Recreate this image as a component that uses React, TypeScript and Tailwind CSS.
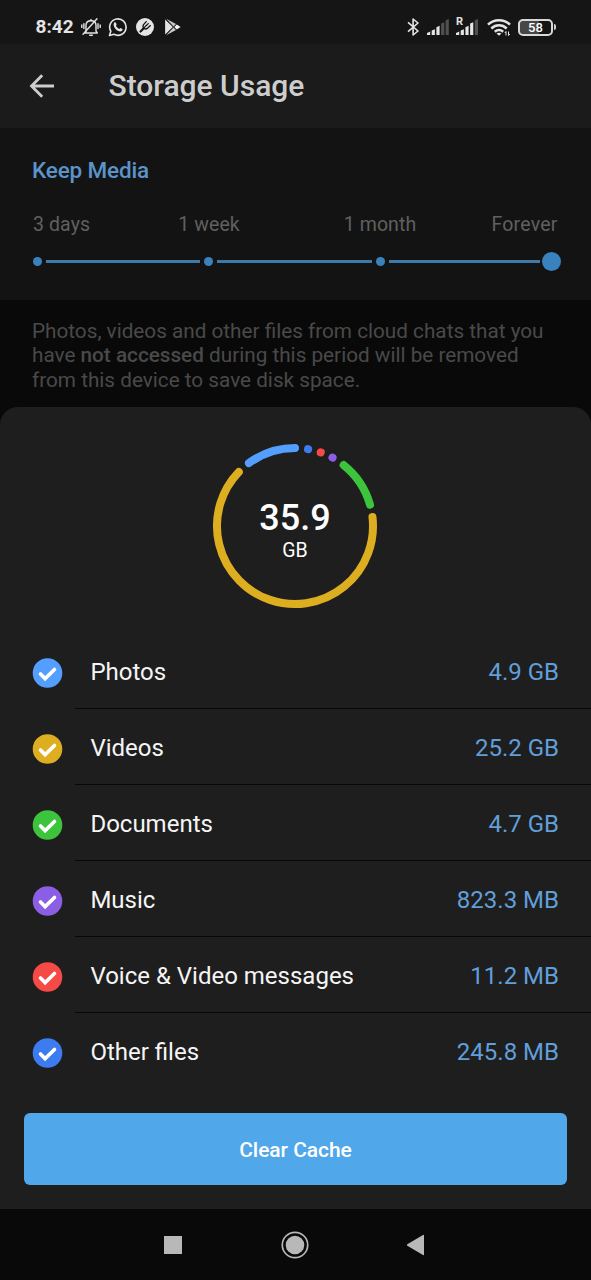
import React from "react";

type Row = { name: string; size: string; color: string };

const ROWS: Row[] = [
  { name: "Photos", size: "4.9 GB", color: "fill-[#539eff]" },
  { name: "Videos", size: "25.2 GB", color: "fill-[#deae21]" },
  { name: "Documents", size: "4.7 GB", color: "fill-[#3cc43c]" },
  { name: "Music", size: "823.3 MB", color: "fill-[#8b5fe5]" },
  { name: "Voice & Video messages", size: "11.2 MB", color: "fill-[#f54a45]" },
  { name: "Other files", size: "245.8 MB", color: "fill-[#3c7bf0]" },
];

const point = (deg: number) => {
  const a = (deg * Math.PI) / 180;
  return `${(83 + 78 * Math.sin(a)).toFixed(2)} ${(83 - 78 * Math.cos(a)).toFixed(2)}`;
};

const arc = (from: number, to: number) =>
  `M${point(from)}A78 78 0 ${to - from > 180 ? 1 : 0} 1 ${point(to)}`;

const SEGMENTS = [
  { from: -36.2, to: 0, color: "#539eff" },
  { from: 9.6, to: 9.7, color: "#3c7bf0" },
  { from: 19.2, to: 19.3, color: "#f54a45" },
  { from: 28.7, to: 28.8, color: "#8b5fe5" },
  { from: 38.6, to: 74.1, color: "#3cc43c" },
  { from: 83.4, to: 313.9, color: "#deae21" },
];

function StatusBar() {
  return (
    <div className="flex h-11 shrink-0 items-center bg-[#151515] pt-[10px] pl-[35.5px] text-[#e4e4e4]">
      <span className="w-[45.5px] text-[19px] leading-[22px] font-bold whitespace-nowrap">8:42</span>
      <svg className="h-5 w-5" viewBox="0 0 20 20" fill="none" stroke="currentColor" strokeWidth="1.4" strokeLinecap="round">
        <path d="M5 14.5V8.2C5 5.4 7 3.7 10 3.7C13 3.7 15 5.4 15 8.2V14.2L16.3 16H3.8Z" strokeLinejoin="round" />
        <path d="M10 3.4V2.4M8.7 18.2H11.3M2 17.3L16 1.8M2.9 6.8V11.5M17 6.8V11.5M.8 8V10.4M19.2 8V10.4" />
      </svg>
      <svg className="ml-[7px] h-5 w-5" viewBox="0 0 20 20" fill="none" stroke="currentColor" strokeWidth="1.6">
        <path d="M1.5 18.5L2.8 14.2A8.2 8.2 0 1 1 6 17.3Z" strokeLinejoin="round" />
        <path d="M6.2 5.6C6.8 5 7.6 5 7.9 5.7L8.6 7.5C8.7 7.9 8 8.5 7.9 8.8C8.6 10.2 9.7 11.3 11.2 12C11.5 11.9 12.1 11 12.5 11.1L14.4 12C14.9 12.3 14.4 13.7 13.6 14.1C11.8 15 9.2 13.7 7.5 12C5.8 10.2 4.9 7.2 6.2 5.6Z" fill="currentColor" stroke="none" />
      </svg>
      <svg className="ml-2 h-[18px] w-[18px]" viewBox="0 0 18 18" fill="none">
        <circle cx="9" cy="9" r="9" fill="currentColor" />
        <path d="M4.5 13.5L8 10" stroke="#151515" strokeWidth="2.2" strokeLinecap="round" />
        <path d="M10.2 3.6L7.4 6.8C6.7 8 6.9 9.3 8 10.2C9 11.1 10.3 11.1 11.3 10.4L14.4 7.6" stroke="#151515" strokeWidth="1.3" strokeLinecap="round" />
        <path d="M9 8.8L12.3 5.6" stroke="#151515" strokeWidth="1.3" strokeLinecap="round" />
      </svg>
      <svg className="ml-[10px] h-[18px] w-[18px]" viewBox="0 0 18 18">
        <path d="M1.1 1.5V16.5L8.8 9Z" fill="currentColor" />
        <path d="M2.2 .7L12 6L9.5 8.4ZM2.2 17.3L12 12L9.5 9.6Z" fill="#c8c8c8" />
        <path d="M12.8 6.5L16.6 9L12.8 11.5L10.3 9Z" fill="#f4f4f4" />
      </svg>
      <svg className="ml-[225px] h-5 w-3" viewBox="0 0 12 20" fill="none" stroke="currentColor" strokeWidth="1.6">
        <path d="M1 5.3L11 14L6.1 18V2L11 6L1 14.7" strokeLinejoin="round" />
      </svg>
      <svg className="ml-2 h-[18px] w-[22px]" viewBox="0 0 22 18" fill="currentColor">
        <path d="M0 17V15L3.2 13.6V17ZM4.7 17V12.6L7.9 11.3V17ZM9.4 17V9.2L12.6 7.8V17Z" />
        <path d="M14.1 17V5.6L17.3 4.3V17ZM18.6 17V2.3L21.8 1V17Z" fill="#505050" />
      </svg>
      <div className="relative ml-[7px] h-[18px] w-[23px]">
        <span className="absolute -top-[1px] left-0 text-[11px] leading-[10px] font-bold">R</span>
        <svg className="h-[18px] w-[23px]" viewBox="0 0 23 18" fill="currentColor">
          <path d="M0 17V15L3.2 13.6V17ZM4.7 17V12.6L7.9 11.3V17ZM9.4 17V9.2L12.6 7.8V17ZM14.1 17V5.6L17.3 4.3V17Z" />
          <path d="M18.8 17V2.3L22 1V17Z" fill="#505050" />
        </svg>
      </div>
      <svg className="ml-2 h-5 w-6" viewBox="0 0 24 20" fill="none" stroke="currentColor" strokeWidth="2.5">
        <path d="M1 7.7C7 1.7 17 1.7 23 7.7M4.3 11.5C8.8 7.3 15.2 7.3 19.7 11.5M7.8 14.8C10.4 12.5 13.6 12.5 16.2 14.8" />
        <path d="M9.5 16.5Q12 14.8 14.5 16.5L12 18.7Z" fill="currentColor" stroke="none" />
        <path d="M19 18.5V14.5L17.8 16M21.5 14.5V18.5L22.8 17" strokeWidth="1" />
      </svg>
      <div className="ml-[7px] flex h-[17px] w-[35px] items-center justify-center rounded-[5px] border-2 border-[#d8d8d8] bg-linear-to-r from-[#474747] from-60% to-[#151515] to-60%">
        <span className="text-[13px] leading-[13px] font-medium text-white">58</span>
      </div>
      <div className="ml-px h-[6px] w-[2px] rounded-r-sm bg-[#d0d0d0]" />
    </div>
  );
}

function Dot() {
  return <div className="size-[9px] shrink-0 rounded-full bg-[#3b82bd]" />;
}

function Track({ wide = true }: { wide?: boolean }) {
  return <div className={`mx-[4px] h-[3px] shrink-0 bg-[#3f79aa] ${wide ? "w-[154.3px]" : "w-[151.4px]"}`} />;
}

function KeepMedia() {
  return (
    <section className="h-[172px] shrink-0 bg-[#131313] pt-[28px]">
      <h2 className="pl-8 text-[22.5px] leading-[28px] font-medium tracking-[-0.15px] text-[#5b94cb]">Keep Media</h2>
      <div className="mt-[27px] flex h-[28px] text-[19.5px] leading-[28px] tracking-[0.1px] whitespace-nowrap text-[#606060]">
        <span className="ml-[33px] w-[90px]">3 days</span>
        <span className="ml-[6px] w-[160px] text-center">1 week</span>
        <span className="ml-[11px] w-[160px] text-center">1 month</span>
        <span className="mr-[33.5px] ml-auto tracking-[0.2px]">Forever</span>
      </div>
      <div className="mt-[12px] ml-[33px] flex h-[21px] w-[528px] items-center">
        <Dot />
        <Track />
        <Dot />
        <Track />
        <Dot />
        <Track wide={false} />
        <div className="-ml-[2px] size-[19px] shrink-0 rounded-full bg-[#3882bd]" />
      </div>
    </section>
  );
}

function UsageRing() {
  return (
    <div className="ml-[212px] grid size-[166px] place-items-center">
      <svg className="col-start-1 row-start-1 size-[166px]" viewBox="0 0 166 166" fill="none" strokeWidth="8" strokeLinecap="round">
        {SEGMENTS.map((s) => (
          <path key={s.from} d={arc(s.from, s.to)} stroke={s.color} />
        ))}
      </svg>
      <div className="col-start-1 row-start-1 flex flex-col items-center pt-[8px] text-white">
        <span className="text-[36px] leading-[40px] font-medium">35.9</span>
        <span className="text-[19.5px] leading-[25px]">GB</span>
      </div>
    </div>
  );
}

function CacheRow({ row, last }: { row: Row; last: boolean }) {
  return (
    <li className="flex h-[76px] pl-8">
      <svg className="mt-[25px] size-[31px] shrink-0" viewBox="0 0 31 31" fill="none">
        <circle cx="15.5" cy="15" r="14.8" className={row.color} />
        <path d="M8.5 16L13.1 20.6L22.5 11.5" stroke="#fff" strokeWidth="3.6" strokeLinecap="round" />
      </svg>
      <div className={`ml-3 flex flex-1 justify-between border-b pt-6 pr-8 pl-[15.4px] text-[24px] leading-[30px] ${last ? "border-transparent" : "border-[#080808]"}`}>
        <span className="text-[#f5f5f5]">{row.name}</span>
        <span className="text-[#619fdb]">{row.size}</span>
      </div>
    </li>
  );
}

export default function App() {
  return (
    <main className="flex h-[1280px] w-[591px] flex-col overflow-hidden bg-[#090909] font-[Roboto,sans-serif]">
      <StatusBar />
      <header className="flex h-[84px] shrink-0 items-center bg-[#1b1b1b] pl-[29px] text-[#cdcdcd]">
        <svg className="h-[26px] w-[26px]" viewBox="0 0 26 26" fill="none" stroke="currentColor" strokeWidth="2.8">
          <path d="M25 13H3M13.2 2.3L2.5 13L13.2 23.7" />
        </svg>
        <h1 className="ml-[53.5px] text-[30px] leading-[36px] font-medium">Storage Usage</h1>
      </header>
      <KeepMedia />
      <p className="h-[107px] shrink-0 pt-[18.6px] pl-8 text-[20.72px] leading-[24.6px] whitespace-nowrap text-[#494949]">
        Photos, videos and other files from cloud chats that you
        <br />
        have <b className="font-medium">not accessed</b> during this period will be removed
        <br />
        from this device to save disk space.
      </p>
      <section className="flex h-[802px] shrink-0 flex-col rounded-t-[18px] bg-[#1e1e1e] pt-9">
        <UsageRing />
        <ul className="mt-6">
          {ROWS.map((row, i) => (
            <CacheRow key={row.name} row={row} last={i === ROWS.length - 1} />
          ))}
        </ul>
        <button className="mx-6 mt-6 h-[72px] rounded-[6px] bg-[#50a7ea] pt-[3px] text-[21px] font-medium tracking-[-0.05px] text-white">Clear Cache</button>
      </section>
      <nav className="flex flex-1 items-center bg-[#090909] text-[#b8b8b8]">
        <div className="ml-[164px] h-[18px] w-[18px] bg-current" />
        <svg className="ml-[99px] size-7" viewBox="0 0 28 28" fill="none">
          <circle cx="14" cy="14" r="12.7" stroke="currentColor" strokeWidth="1.7" />
          <circle cx="14" cy="14" r="9.3" fill="currentColor" />
        </svg>
        <svg className="ml-[97px] h-[22px] w-[19px]" viewBox="0 0 19 22" fill="currentColor">
          <path d="M1.3 10.2L17 .9Q18 .5 18 1.6V20.4Q18 21.5 17 21.1L1.3 11.8Q.3 11 1.3 10.2Z" />
        </svg>
      </nav>
    </main>
  );
}
